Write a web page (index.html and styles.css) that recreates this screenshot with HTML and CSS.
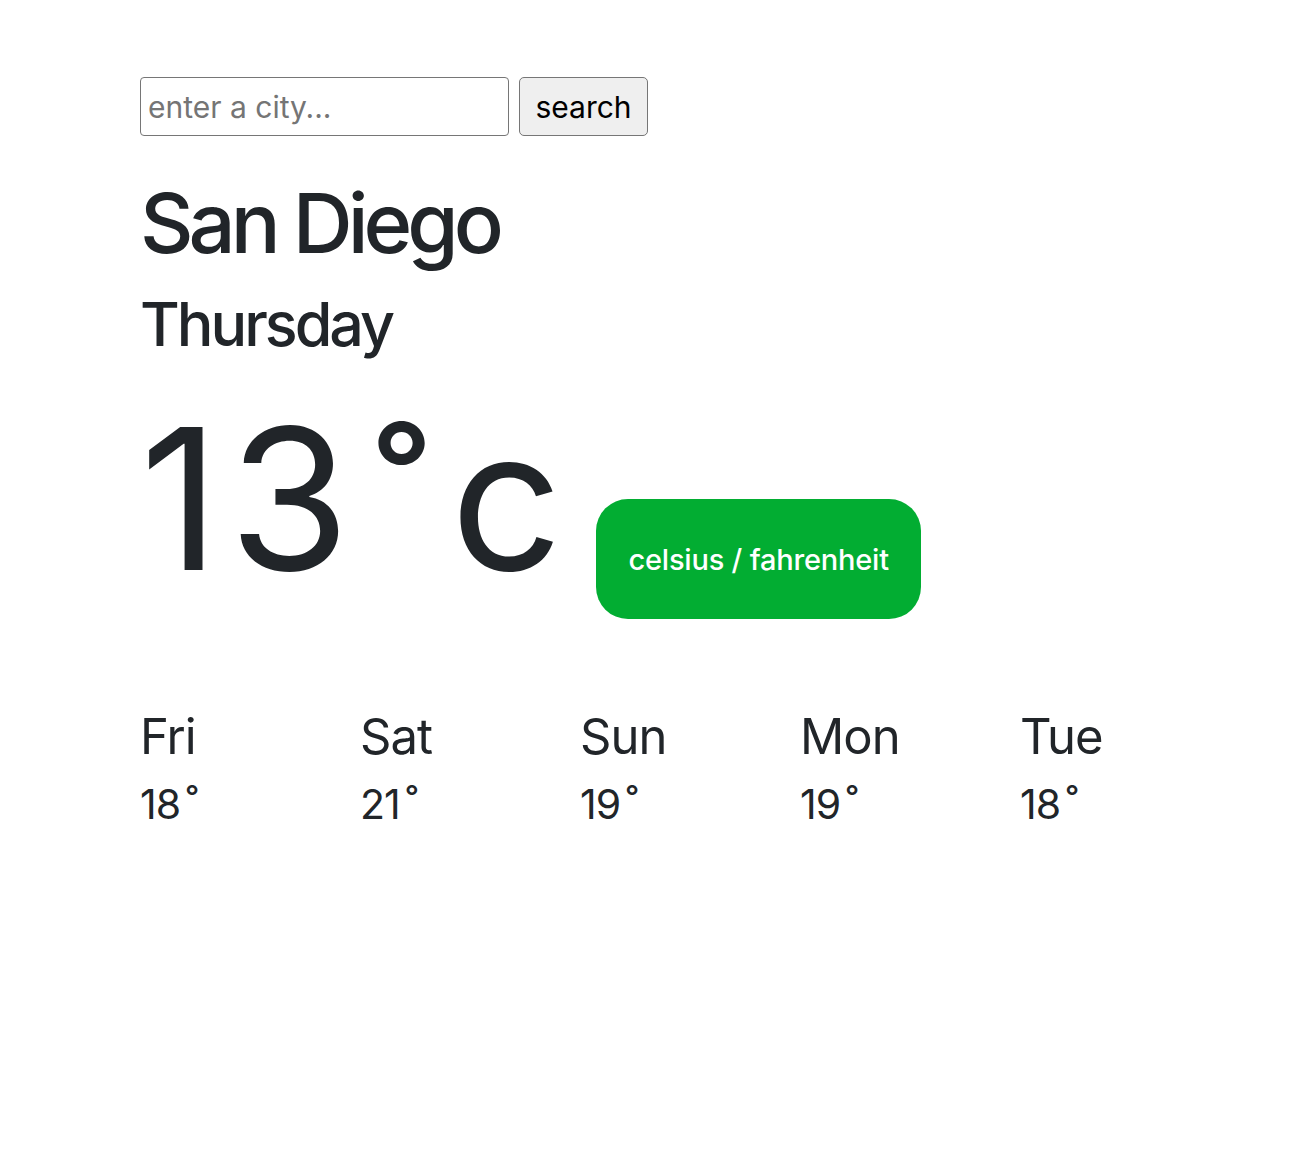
FILE: index.html
```html
<!DOCTYPE html>
<html lang="en">
<head>
<meta charset="utf-8">
<title>Weather</title>
<link rel="stylesheet" href="styles.css">
</head>
<body>
<main class="app">
  <form class="search-form">
    <input class="search-input" type="text" placeholder="enter a city...">
    <button class="search-button" type="button">search</button>
  </form>
  <h1 class="city">San Diego</h1>
  <h2 class="day">Thursday</h2>
  <div class="current">
    <span class="current-temp">13<span class="deg">˚</span>c</span>
    <button class="unit-toggle" type="button">celsius / fahrenheit</button>
  </div>
  <div class="forecast">
    <div class="forecast-day"><div class="fd-name">Fri</div><div class="fd-temp">18<span class="fd-deg">˚</span></div></div>
    <div class="forecast-day"><div class="fd-name">Sat</div><div class="fd-temp">21<span class="fd-deg">˚</span></div></div>
    <div class="forecast-day"><div class="fd-name">Sun</div><div class="fd-temp">19<span class="fd-deg">˚</span></div></div>
    <div class="forecast-day"><div class="fd-name">Mon</div><div class="fd-temp">19<span class="fd-deg">˚</span></div></div>
    <div class="forecast-day"><div class="fd-name">Tue</div><div class="fd-temp">18<span class="fd-deg">˚</span></div></div>
  </div>
</main>
</body>
</html>
```
FILE: styles.css
```css
* { box-sizing: border-box; }
html, body { margin: 0; padding: 0; background: #fff; }
body {
  font-family: Inter, "Noto Sans", sans-serif;
  color: #212529;
}
.app {
  padding: 77px 0 0 140px;
}
.search-form {
  display: flex;
  gap: 10px;
  align-items: stretch;
}
.search-input {
  width: 369px;
  height: 59px;
  border: 1.5px solid #767676;
  border-radius: 4px;
  padding: 0 7px;
  font-family: inherit;
  font-size: 30px;
  color: #212529;
  background: #fff;
}
.search-input::placeholder { color: #757575; }
.search-button {
  width: 129px;
  height: 59px;
  border: 1.5px solid #767676;
  border-radius: 5px;
  background: #efefef;
  font-family: inherit;
  font-size: 30px;
  color: #000;
  padding: 0;
}
.city {
  margin: 38px 0 0;
  font-size: 83px;
  line-height: 1.2;
  font-weight: 500;
  letter-spacing: -5px;
}
.day {
  margin: 14px 0 0;
  font-size: 61px;
  line-height: 1.2;
  font-weight: 500;
  letter-spacing: -3px;
}
.current {
  margin-top: 40px;
  display: flex;
  align-items: baseline;
}
.current-temp {
  font-size: 196px;
  line-height: 1;
  font-weight: 400;
  letter-spacing: 9px;
}
.deg {
  margin: 0 13px 0 16px;
  font-size: 180px;
}
.unit-toggle {
  margin-left: 25px;
  border: none;
  border-radius: 32px;
  background: #02ad32;
  color: #fff;
  font-family: inherit;
  font-size: 29px;
  line-height: 36px;
  padding: 43px 32px 41px;
  font-weight: 500;
  letter-spacing: -0.2px;
}
.forecast {
  margin-top: 89px;
  display: grid;
  grid-template-columns: repeat(5, 220px);
}
.fd-name {
  font-size: 49px;
  line-height: 1.2;
  font-weight: 400;
  letter-spacing: -1px;
}
.fd-temp {
  margin-top: 13px;
  font-size: 41px;
  line-height: 1.2;
  font-weight: 400;
  letter-spacing: -1px;
}
.fd-deg {
  margin-left: 6px;
}
```
